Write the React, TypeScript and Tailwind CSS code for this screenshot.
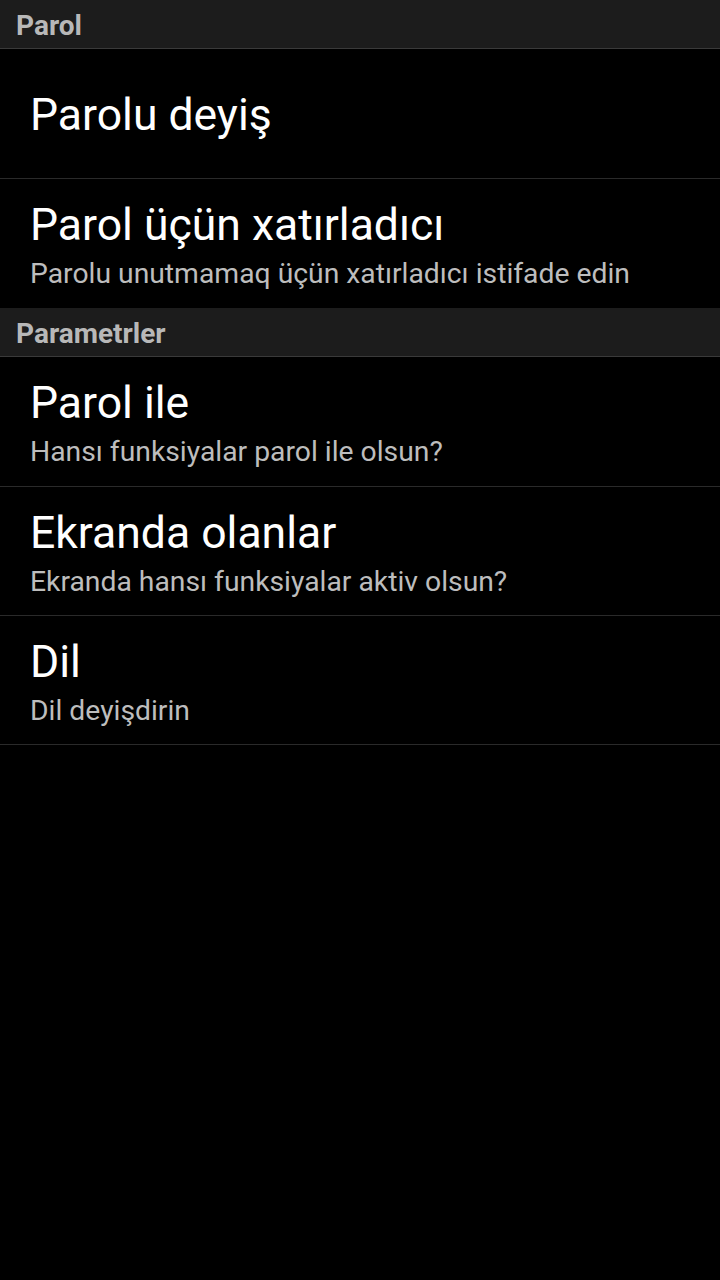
const sections = [
  {
    title: 'Parol',
    items: [
      { title: 'Parolu deyiş' },
      { title: 'Parol üçün xatırladıcı', summary: 'Parolu unutmamaq üçün xatırladıcı istifade edin' },
    ],
  },
  {
    title: 'Parametrler',
    items: [
      { title: 'Parol ile', summary: 'Hansı funksiyalar parol ile olsun?' },
      { title: 'Ekranda olanlar', summary: 'Ekranda hansı funksiyalar aktiv olsun?' },
      { title: 'Dil', summary: 'Dil deyişdirin' },
    ],
  },
];

function Header({ title }: { title: string }) {
  return (
    <div className="h-[49px] border-b border-[#3a3a3a] bg-[#1c1c1c] px-4 pt-[4px] text-[28px] leading-[44px] font-bold text-[#b8b8b8]">
      {title}
    </div>
  );
}

function Row({ title, summary, first, border }: { title: string; summary?: string; first: boolean; border: boolean }) {
  const cls = [
    'flex flex-col justify-center px-[30px] pt-[3px]',
    first ? 'h-[130px]' : 'h-[129px]',
    border ? 'border-b border-[#2a2a2a]' : '',
  ].join(' ');
  return (
    <div className={cls}>
      <div className="text-[44.5px] leading-[52px] text-white">{title}</div>
      {summary && <div className="mt-[6px] text-[28.3px] leading-[34px] text-[#bdbdbd]">{summary}</div>}
    </div>
  );
}

export default function App() {
  return (
    <div className="min-h-[1280px] w-[720px] bg-black" style={{ fontFamily: 'Roboto, "Noto Sans", sans-serif' }}>
      {sections.map((s, si) => (
        <div key={s.title}>
          <Header title={s.title} />
          {s.items.map((it, i) => (
            <Row
              key={it.title}
              title={it.title}
              summary={it.summary}
              first={i === 0}
              border={!(si === 0 && i === s.items.length - 1)}
            />
          ))}
        </div>
      ))}
    </div>
  );
}
